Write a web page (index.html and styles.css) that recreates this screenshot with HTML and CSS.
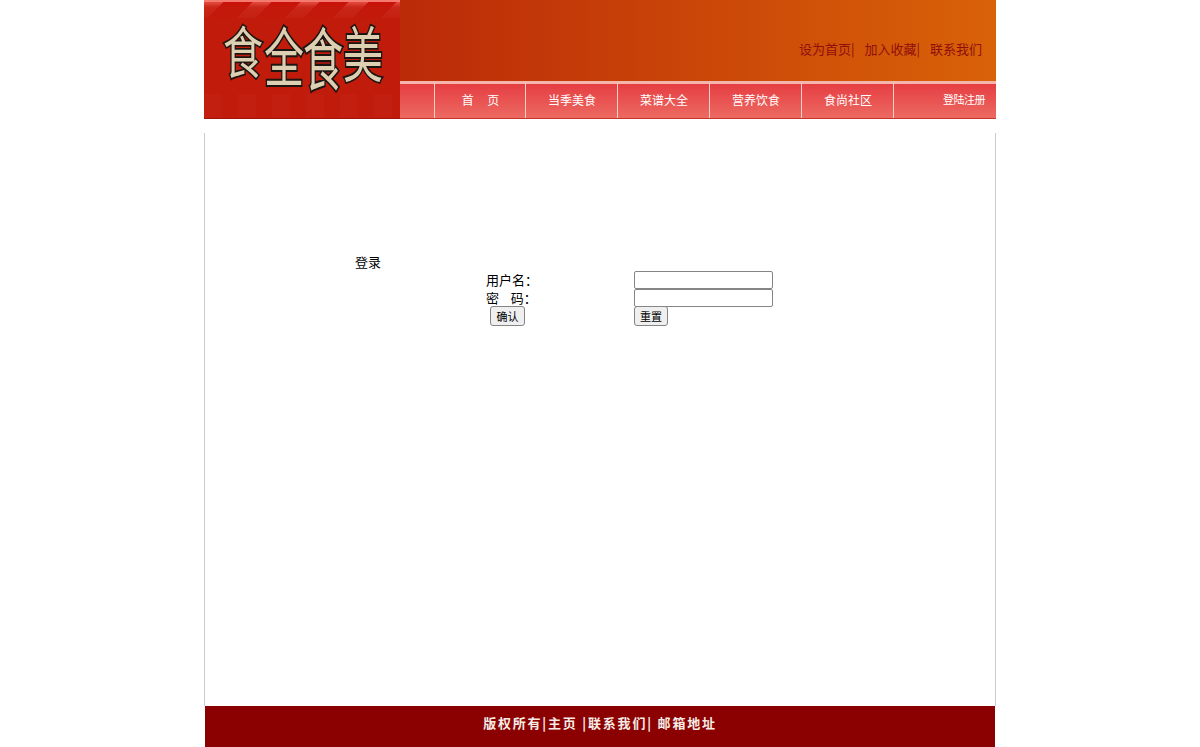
FILE: index.html
```html
<!DOCTYPE html>
<html lang="zh">
<head>
<meta charset="utf-8">
<title>食全食美</title>
<link rel="stylesheet" href="styles.css">
</head>
<body>
<div class="page">
  <header class="header">
    <div class="logo">
      <div class="logo-stripes"></div>
      <div class="logo-bottom"></div>
      <div class="logo-text">
        <span class="lc c1">食</span><span class="lc c2">全</span><span class="lc c3">食</span><span class="lc c4">美</span>
      </div>
    </div>
    <div class="head-right">
      <div class="top-links">
        <span>设为首页|</span><span>加入收藏|</span><span>联系我们</span>
      </div>
      <nav class="nav">
        <div class="nav-cell nav-first"></div>
        <a class="nav-cell nav-item nav-home">首&nbsp;&nbsp;&nbsp;&nbsp;&nbsp;页</a>
        <a class="nav-cell nav-item">当季美食</a>
        <a class="nav-cell nav-item">菜谱大全</a>
        <a class="nav-cell nav-item">营养饮食</a>
        <a class="nav-cell nav-item">食尚社区</a>
        <a class="nav-cell nav-login">登陆注册</a>
      </nav>
    </div>
  </header>
  <main class="content">
    <div class="login-title">登录</div>
    <form class="login-form">
      <label class="lab">用户名：</label><input class="field" type="text">
      <label class="lab">密&nbsp;&nbsp;&nbsp;&nbsp;码：</label><input class="field" type="password">
      <div class="btn-cell"><button class="btn" type="button">确认</button></div><div><button class="btn btn-reset" type="button">重置</button></div>
    </form>
  </main>
  <footer class="footer">版权所有|主页 |联系我们| 邮箱地址</footer>
</div>
</body>
</html>
```
FILE: styles.css
```css
* { box-sizing: border-box; }
html, body { margin: 0; padding: 0; background: #fff; height: 100%; overflow: hidden; }
body { font-family: "Noto Sans CJK SC", "Liberation Sans", sans-serif; font-size: 13px; color: #000; }
.page { width: 792px; height: 747px; margin: 0 auto; display: flex; flex-direction: column; }
.header { height: 119px; display: flex; flex: none; }
.logo { width: 196px; height: 119px; background: #c11b0c; position: relative; overflow: hidden; border-bottom: 1px solid #a5140a; }
.logo-stripes { height: 18px; border-top: 2px solid #f47a70; background: repeating-linear-gradient(135deg, #e0483c 0 14px, #c9120a 14px 34px); -webkit-mask-image: linear-gradient(180deg, #000 15%, rgba(0,0,0,.25) 40%, rgba(0,0,0,.15) 100%); mask-image: linear-gradient(180deg, #000 15%, rgba(0,0,0,.25) 40%, rgba(0,0,0,.15) 100%); }
.logo-bottom { position: absolute; left: 0; right: 0; bottom: 0; height: 24px; background: repeating-linear-gradient(90deg, rgba(255,255,255,.02) 0 18px, transparent 18px 34px); }
.logo-text { position: absolute; left: 0; top: 0; width: 100%; height: 100%; }
.lc { position: absolute; width: 40px; height: 40px; font-family: "Noto Sans CJK TC", sans-serif; font-size: 40px; font-weight: 400; color: #dccfb2; -webkit-text-stroke: 2.5px #1d1512; paint-order: stroke fill; line-height: 40px; text-align: center; }
.c1 { left: 19px; top: 29px; transform: scaleY(1.4); }
.c2 { left: 60px; top: 34px; transform: scaleY(1.6); }
.c3 { left: 99px; top: 36px; transform: scaleY(1.7); }
.c4 { left: 139px; top: 31px; transform: scaleY(1.5); }
.head-right { flex: 1; display: flex; flex-direction: column; background: linear-gradient(90deg, #bb2a08 0%, #d96208 100%); }
.top-links { height: 81px; display: flex; justify-content: flex-end; gap: 10px; padding: 39px 14px 0 0; font-size: 13px; line-height: 20px; color: #8f0f0c; }
.nav { height: 38px; display: flex; background: linear-gradient(180deg, #e53a3f 0%, #ec6a62 100%); border-bottom: 1px solid #c8352e; }
.nav-cell { height: 37px; display: flex; align-items: center; justify-content: center; color: #fff; font-size: 12px; border-top: 3px solid #f5b5ac; }
.nav-first { width: 35px; border-right: 1px solid #f6d0c8; }
.nav-item { width: 92px; border-right: 1px solid #f6d0c8; padding: 0 0 3px 1px; }
.nav-home { width: 91px; }
.nav-login { flex: 1; justify-content: flex-end; padding: 0 11px 5px 0; font-size: 11px; letter-spacing: -0.5px; }
.content { flex: 1; margin-top: 14px; border-left: 1px solid #ccc; border-right: 1px solid #ccc; padding: 119px 0 0 150px; }
.login-title { font-size: 13px; line-height: 20px; }
.login-form { display: grid; grid-template-columns: 148px 139px; margin-left: 131px; margin-top: -1px; align-items: start; }
.lab { line-height: 18px; height: 18px; font-size: 13px; }
.field { width: 139px; height: 18px; margin: 0; padding: 0; border: 1px solid #858585; border-radius: 2px; background: #fff; }
.btn-cell { padding-left: 4px; }
.btn { display: block; width: 35px; height: 20px; margin: -1px 0 0; padding: 0; font: 11px "Noto Sans CJK SC", sans-serif; color: #000; background: #efefef; border: 1px solid #858585; border-radius: 3px; }
.btn-reset { width: 34px; }
.footer { height: 41px; flex: none; margin: 0 1px; background: #8b0000; color: #f5ece6; font-weight: 700; font-size: 13px; letter-spacing: 1.8px; text-align: center; line-height: 34px; }
```
